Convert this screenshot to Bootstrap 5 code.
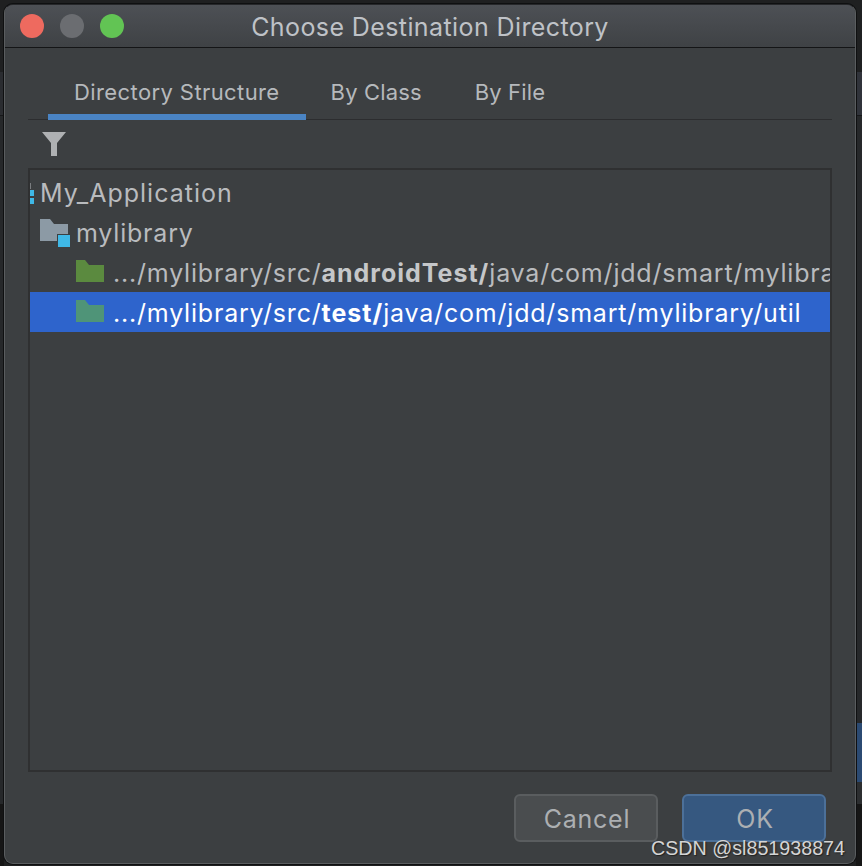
<!DOCTYPE html>
<html lang="en">
<head>
<meta charset="utf-8">
<title>Choose Destination Directory</title>
<link href="https://cdn.jsdelivr.net/npm/bootstrap@5.3.0/dist/css/bootstrap.min.css" rel="stylesheet">
<style>
html,body{height:100%;margin:0}
body{padding:4px 6px 2px 4px;font-family:Inter,"Liberation Sans",sans-serif;overflow:hidden;
background-color:#1f2021;
background-image:
 linear-gradient(#1f2021 72px,#30333a 72px,#30333a 115px,#17181a 115px,#17181a 116px,#26282a 116px,#26282a 723px,#2b4a72 723px,#2b4a72 782px,#2c2e30 782px,#2c2e30 804px,#161616 804px),
 linear-gradient(#1f2021 72px,#2a2c30 72px,#2a2c30 115px,#17181a 115px,#17181a 116px,#26282a 116px,#26282a 804px,#161616 804px);
background-size:6px 100%,4px 100%;background-position:right top,left top;background-repeat:no-repeat}
.dlg-win{height:860px;background:#3c3f41;border-radius:9px;border:1px solid #5a5d5f;border-top-color:#26272a;position:relative;overflow:hidden;box-shadow:0 0 0 1px #0f1011}
.dlg-title{height:43px;background:linear-gradient(#4d5055,#3f4245);border-bottom:1px solid #141516;padding-left:15px;flex:none}
.light{width:24px;height:24px;border-radius:50%;margin-right:16px;flex:none}
.l-red{background:#ee6a5f}.l-gray{background:#6b6d71}.l-green{background:#62c454}
.dlg-name{font-size:25px;color:#bfc2c7;left:0;right:0;text-align:center;position:absolute;top:5px;line-height:35px;letter-spacing:.4px}
.dlg-body{padding:0 23px 0 23px;flex:1 1 auto;min-height:0}
.tabbar{height:72px;border-bottom:1px solid #2c2d2f;padding-left:20px;flex:none}
.tab-item{height:72px;padding:22px 26px 0;font-size:22px;line-height:44px;color:#b6b9bc;letter-spacing:.4px}
.tab-item.sel{box-shadow:inset 0 -6px 0 #4a84c4}
.tab-plain{letter-spacing:.15px;padding-left:25px;padding-right:28px}
.filter-row{height:48px;padding:12px 0 0 14px;flex:none}
.filter-row svg{display:block}
.tree{height:604px;border:2px solid #2f3031;padding:3px 0 0 0;flex:none;overflow:hidden}
.row-item{height:40px;font-size:25px;line-height:40px;color:#b9bbbe;white-space:nowrap;overflow:hidden;letter-spacing:.8px}
.row-item b{font-weight:700;color:#c5c7c9;letter-spacing:1px}
.row-item.sel{background:#2e64cc;color:#fff;margin-top:-1px;padding-top:1px}
.row-item.sel b{color:#fff}
.lvl0{padding-left:10px;letter-spacing:1px}.lvl1{padding-left:10px}.lvl2{padding-left:46px}
.lvl1 svg{margin-right:6px;flex:none}
.lvl2 svg{margin-right:9px;margin-bottom:4px;flex:none}
.root-ic{position:absolute;left:0;top:10px}
.rootwrap{position:relative}
.foot{height:93px;padding:22px 6px 0 0;gap:24px;flex:none}
.dlg-btn{width:144px;height:48px;border-radius:6px;font-size:25px;line-height:46px;padding:0 0 0 2px;text-align:center;letter-spacing:.75px;color:#acafb2}
.dlg-btn.cancel{background:#4a4d4f;border:2px solid #5a5d5f}
.dlg-btn.ok{background:#365880;border:2px solid #4c7099}
.wmark{position:absolute;right:10px;bottom:4px;font:19.7px/22px "Liberation Sans",sans-serif;color:#d4d4d4;text-shadow:1px 1px 1px #222;white-space:nowrap}
</style>
</head>
<body>
<div class="dlg-win d-flex flex-column">
  <div class="dlg-title d-flex align-items-center position-relative">
    <span class="light l-red"></span><span class="light l-gray"></span><span class="light l-green"></span>
    <div class="dlg-name">Choose Destination Directory</div>
  </div>
  <div class="dlg-body d-flex flex-column">
    <div class="tabbar d-flex">
      <div class="tab-item sel">Directory Structure</div>
      <div class="tab-item tab-plain">By Class</div>
      <div class="tab-item tab-plain">By File</div>
    </div>
    <div class="filter-row">
      <svg width="24" height="24" viewBox="0 0 24 24"><path fill="#afb1b3" d="M0 0h24L15 11v13H9V11z"/></svg>
    </div>
    <div class="tree">
      <div class="row-item lvl0 rootwrap">
        <svg class="root-ic" width="4" height="24" viewBox="0 0 4 24"><rect y="0" width="1" height="6" fill="#7a7d80"/><rect y="7" width="4" height="6" fill="#3fb8e6"/><rect y="15" width="4" height="6" fill="#3fb8e6"/></svg>
        My_Application
      </div>
      <div class="row-item lvl1 d-flex align-items-center">
        <svg width="30" height="28" viewBox="0 0 30 28"><path fill="#8c9aa5" d="M0 0h10l4 5h14v17H0z"/><rect x="17" y="15" width="13" height="13" fill="#3c3f41"/><rect x="18" y="16" width="12" height="12" fill="#3fb8e6"/></svg>
        <span>mylibrary</span>
      </div>
      <div class="row-item lvl2 d-flex align-items-center">
        <svg width="28" height="22" viewBox="0 0 28 22"><path fill="#5b8a3f" d="M0 0h9l4 5h15v17H0z"/></svg>
        <span>.../mylibrary/src/<b>androidTest/</b>java/com/jdd/smart/mylibrary/util</span>
      </div>
      <div class="row-item lvl2 sel d-flex align-items-center">
        <svg width="28" height="22" viewBox="0 0 28 22"><path fill="#4f9478" d="M0 0h9l4 5h15v17H0z"/></svg>
        <span>.../mylibrary/src/<b>test/</b>java/com/jdd/smart/mylibrary/util</span>
      </div>
    </div>
    <div class="foot d-flex justify-content-end">
      <button type="button" class="btn dlg-btn cancel">Cancel</button>
      <button type="button" class="btn dlg-btn ok">OK</button>
    </div>
  </div>
  <div class="wmark">CSDN @sl851938874</div>
</div>
</body>
</html>
